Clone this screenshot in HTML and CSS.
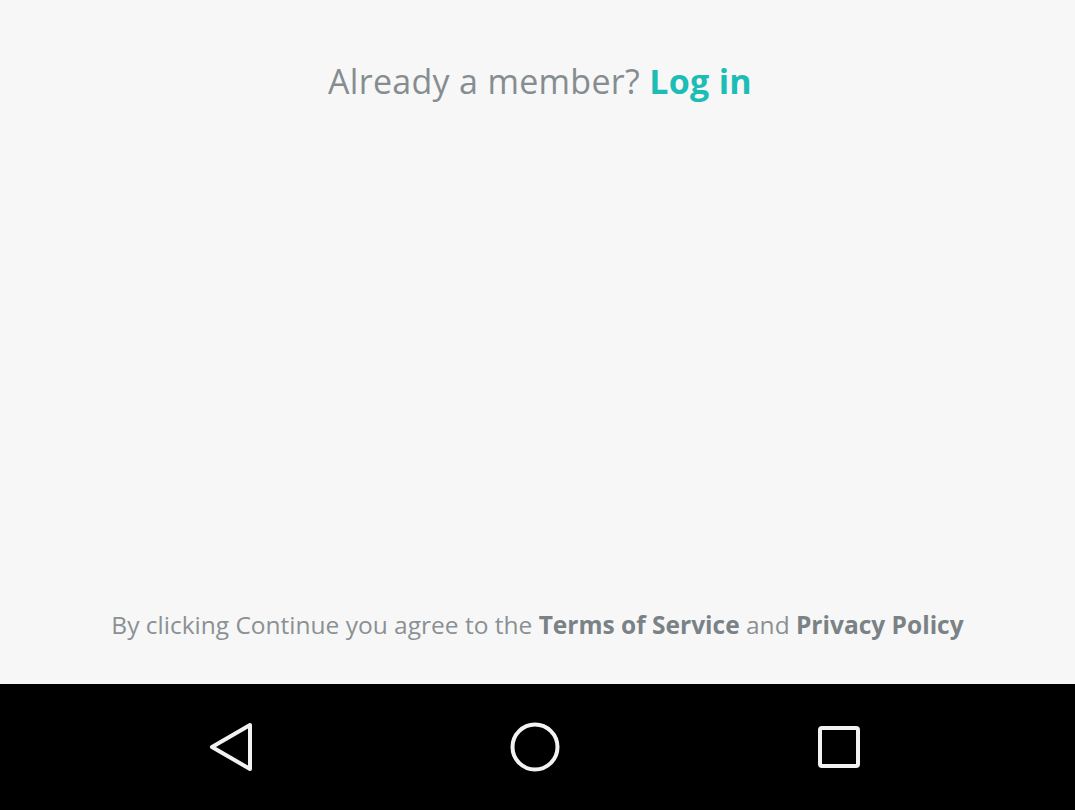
FILE: index.html
```html
<!DOCTYPE html>
<html>
<head>
<meta charset="utf-8">
<link rel="stylesheet" href="styles.css">
</head>
<body>
<div class="screen">
  <main class="content">
    <p class="member">Already a member? <a class="login">Log in</a></p>
    <p class="terms">By clicking Continue you agree to the <b>Terms of Service</b> and <b>Privacy Policy</b></p>
  </main>
  <nav class="navbar">
    <svg class="nav-icon" width="60" height="60" viewBox="0 0 60 60">
      <path d="M49 8 L49 52 L11 30 Z" fill="none" stroke="#f2f2f2" stroke-width="4" stroke-linejoin="round"/>
    </svg>
    <svg class="nav-icon" width="60" height="60" viewBox="0 0 60 60">
      <circle cx="30" cy="30" r="22.5" fill="none" stroke="#f2f2f2" stroke-width="4"/>
    </svg>
    <svg class="nav-icon" width="60" height="60" viewBox="0 0 60 60">
      <rect x="11" y="11" width="38" height="38" rx="2" fill="none" stroke="#f2f2f2" stroke-width="4"/>
    </svg>
  </nav>
</div>
</body>
</html>
```
FILE: styles.css
```css
html, body {
  margin: 0;
  padding: 0;
}
body {
  background: #f7f7f7;
  font-family: "Open Sans", "Liberation Sans", sans-serif;
}
.screen {
  width: 1075px;
  height: 810px;
  display: flex;
  flex-direction: column;
}
.content {
  flex: 1;
  display: flex;
  flex-direction: column;
  justify-content: space-between;
  align-items: center;
  background: #f7f7f7;
}
.member {
  margin: 58px 0 0 5px;
  font-size: 34px;
  line-height: 46px;
  color: #868d91;
  letter-spacing: 0.3px;
}
.login {
  color: #1cbdb5;
  font-weight: 700;
}
.terms {
  margin: 0 0 44px;
  font-size: 24.5px;
  line-height: 30px;
  color: #8a9094;
}
.terms b {
  font-weight: 700;
  color: #7b8286;
}
.navbar {
  height: 126px;
  background: #000;
  display: flex;
  align-items: center;
  justify-content: center;
  gap: 244px;
  padding-right: 5px;
}
.nav-icon {
  display: block;
}
```
